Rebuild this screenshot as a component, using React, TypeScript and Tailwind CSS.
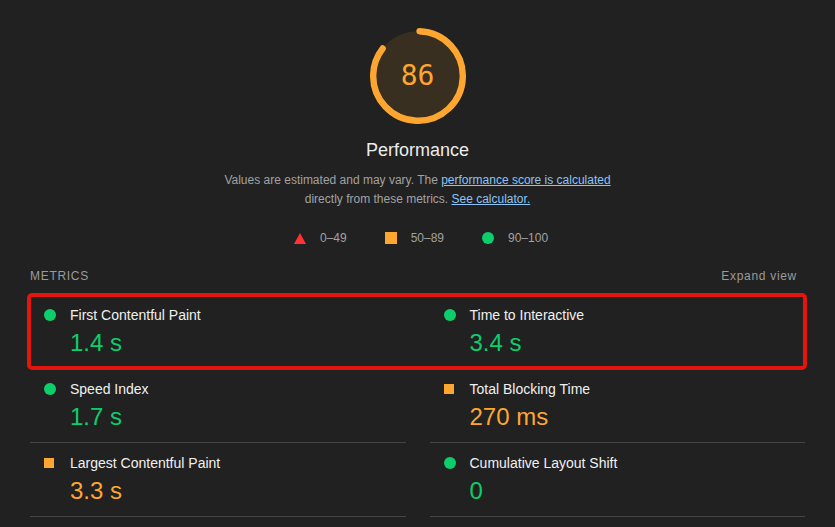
import React from "react";

type Kind = "pass" | "average" | "fail";

const metrics: { title: string; value: string; kind: Kind }[] = [
  { title: "First Contentful Paint", value: "1.4 s", kind: "pass" },
  { title: "Time to Interactive", value: "3.4 s", kind: "pass" },
  { title: "Speed Index", value: "1.7 s", kind: "pass" },
  { title: "Total Blocking Time", value: "270 ms", kind: "average" },
  { title: "Largest Contentful Paint", value: "3.3 s", kind: "average" },
  { title: "Cumulative Layout Shift", value: "0", kind: "pass" },
];

function Gauge({ score }: { score: number }) {
  const c = 2 * Math.PI * 56;
  return (
    <div className="relative w-[96px] h-[96px]">
      <svg viewBox="0 0 120 120" className="w-[96px] h-[96px]">
        <circle cx="60" cy="60" r="56" fill="#382f21" />
        <circle
          cx="60"
          cy="60"
          r="56"
          fill="none"
          stroke="#ffa630"
          strokeWidth="8"
          strokeLinecap="round"
          strokeDasharray={`${(score / 100) * c - 4} ${c}`}
          transform="rotate(-88 60 60)"
        />
      </svg>
      <div className="absolute inset-0 flex items-center justify-center font-['DejaVu_Sans_Mono',monospace] text-[28px] text-[#ffa630]">
        {score}
      </div>
    </div>
  );
}

function MetricIcon({ kind }: { kind: Kind }) {
  if (kind === "pass") return <span className="block w-[12px] h-[12px] rounded-full bg-[#0cce6b]" />;
  if (kind === "average") return <span className="block w-[10px] h-[10px] bg-[#ffa630]" />;
  return (
    <svg width="12" height="11" viewBox="0 0 12 11">
      <polygon points="6,0 12,11 0,11" fill="#ff3333" />
    </svg>
  );
}

export default function App() {
  return (
    <div className="w-[835px] h-[527px] overflow-hidden bg-[#212121] font-['Liberation_Sans',Arial,sans-serif] px-[30px] pt-[28px]">
      {/* header */}
      <div className="flex flex-col items-center">
        <Gauge score={86} />
        <div className="mt-[14px] text-[18px] leading-[24px] text-[#ececec]">Performance</div>
        <p className="mt-[9px] text-center text-[12px] leading-[19px] text-[#a2a2a2]">
          Values are estimated and may vary. The{" "}
          <a className="text-[#8cc4f6] underline">performance score is calculated</a>
          <br />
          directly from these metrics.{" "}
          <a className="text-[#8cc4f6] underline">See calculator.</a>
        </p>
        <div className="mt-[21px] ml-[7px] flex items-center text-[12px] leading-[16px] text-[#a2a2a2]">
          <MetricIcon kind="fail" />
          <span className="ml-[14px]">0–49</span>
          <span className="ml-[38px] block w-[12px] h-[12px] bg-[#ffa630]" />
          <span className="ml-[14px]">50–89</span>
          <span className="ml-[38px] block w-[12px] h-[12px] rounded-full bg-[#0cce6b]" />
          <span className="ml-[14px]">90–100</span>
        </div>
      </div>

      {/* metrics */}
      <div className="mt-[22px] flex items-center justify-between text-[12px] leading-[16px] tracking-[0.7px] text-[#9b9b9b]">
        <span>METRICS</span>
        <span className="pr-[8px]">Expand view</span>
      </div>
      <div className="relative mt-[11px] grid grid-cols-2 gap-x-[24px]">
        {metrics.map((m) => (
          <div key={m.title} className="border-b border-[#444444] pt-[10px] pb-[11px]">
            <div className="flex items-center h-[20px]">
              <span className="ml-[14px] w-[26px] flex items-center">
                <MetricIcon kind={m.kind} />
              </span>
              <span className="text-[14px] leading-[20px] text-[#f0f0f0]">{m.title}</span>
            </div>
            <div
              className={`mt-[4px] ml-[40px] text-[24px] leading-[28px] ${
                m.kind === "pass" ? "text-[#0cce6b]" : "text-[#ffa630]"
              }`}
            >
              {m.value}
            </div>
          </div>
        ))}
        <div className="absolute left-[-3px] top-[-2px] w-[780px] h-[77px] rounded-[5px] border-[4px] border-[#e3150c] pointer-events-none" />
      </div>
    </div>
  );
}
